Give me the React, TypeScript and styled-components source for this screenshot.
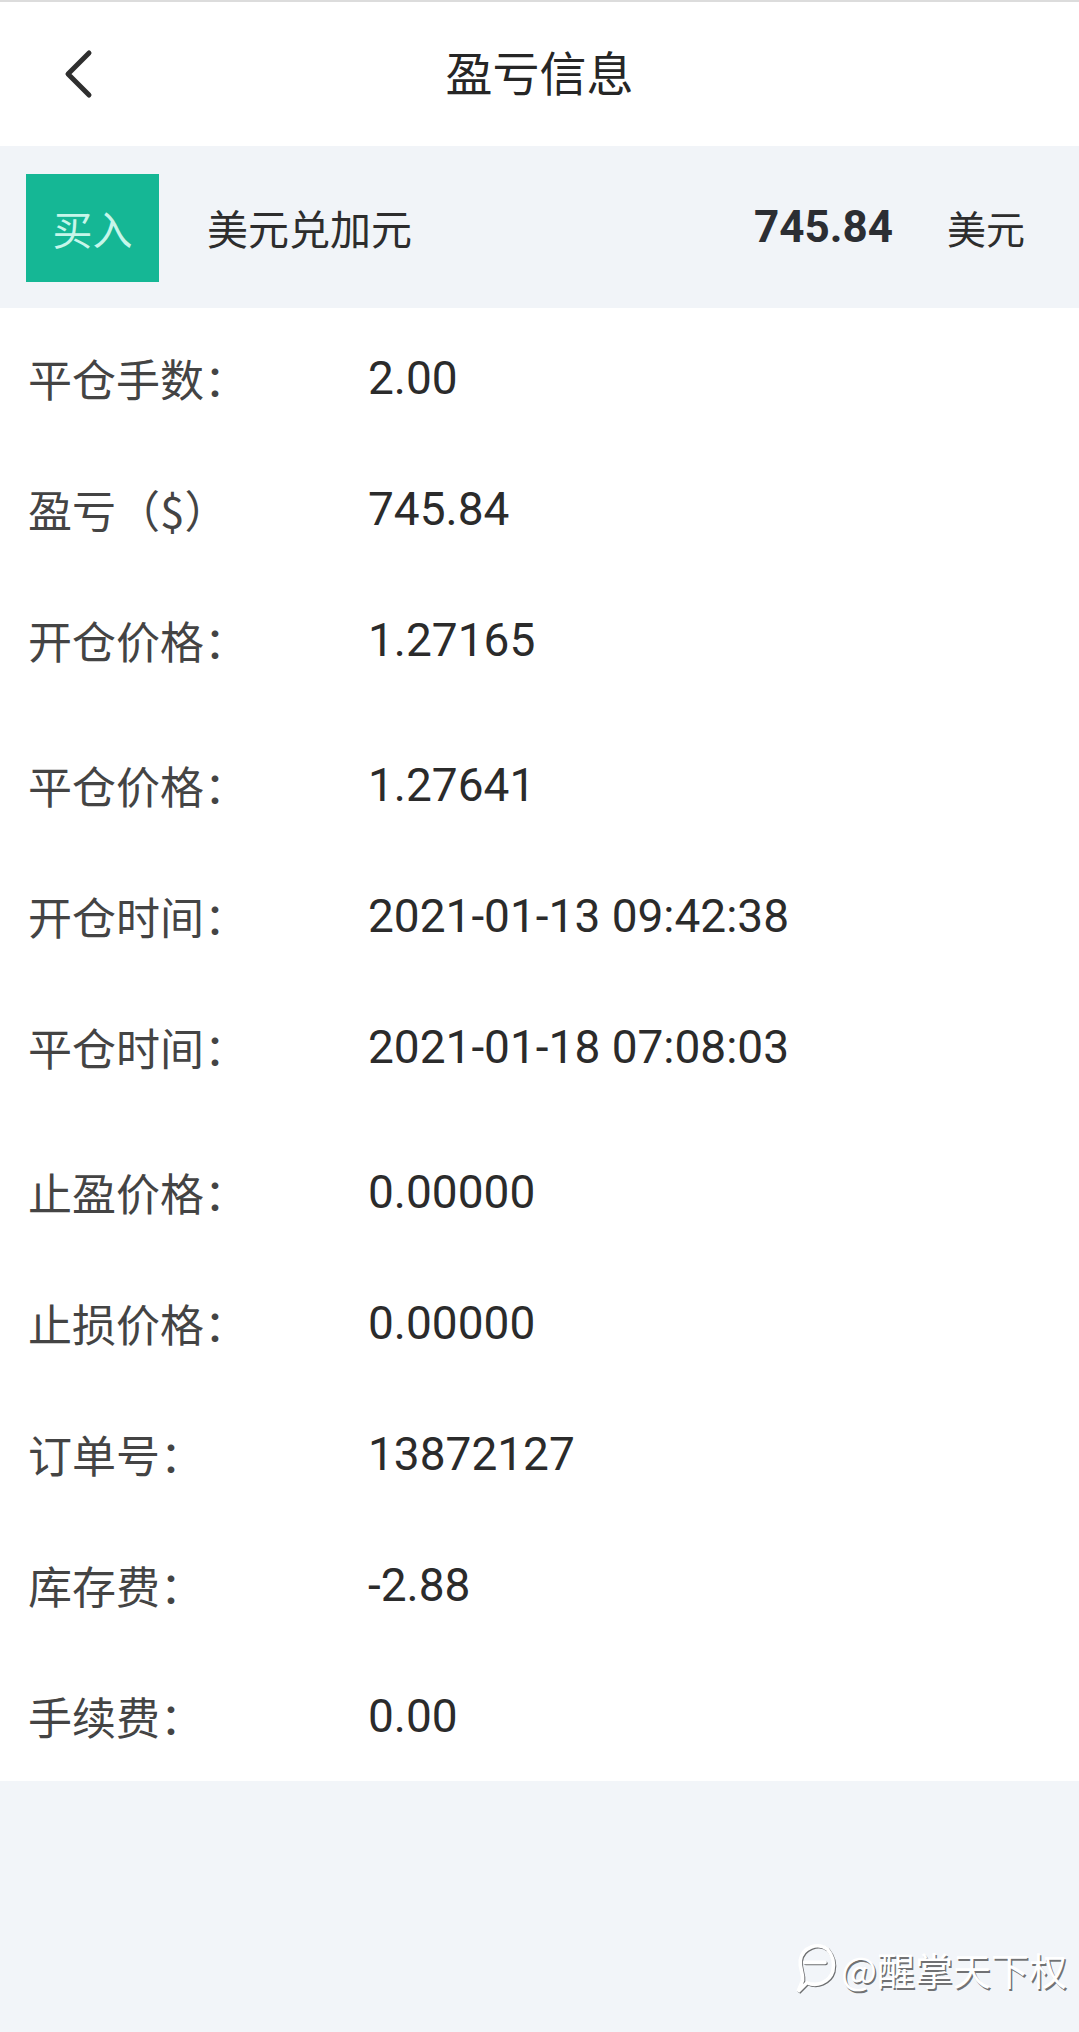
import styled, { createGlobalStyle } from "styled-components";

const GlobalStyle = createGlobalStyle`
  body {
    margin: 0;
    background: #f2f5f9;
    font-family: Roboto, "Noto Sans CJK SC", sans-serif;
  }
`;

const rows = [
  { label: "平仓手数：", value: "2.00" },
  { label: "盈亏（$）", value: "745.84" },
  { label: "开仓价格：", value: "1.27165", gap: true },
  { label: "平仓价格：", value: "1.27641" },
  { label: "开仓时间：", value: "2021-01-13 09:42:38" },
  { label: "平仓时间：", value: "2021-01-18 07:08:03", gap: true },
  { label: "止盈价格：", value: "0.00000" },
  { label: "止损价格：", value: "0.00000" },
  { label: "订单号：", value: "13872127" },
  { label: "库存费：", value: "-2.88" },
  { label: "手续费：", value: "0.00" },
];

const App = () => {
  return (
    <Page>
      <GlobalStyle />
      <Header>
        <BackButton aria-label="返回">
          <svg width="32" height="50" viewBox="0 0 32 50">
            <polyline
              points="27,4 6,25 27,46"
              fill="none"
              stroke="#2f2f2f"
              strokeWidth="5"
              strokeLinecap="round"
              strokeLinejoin="round"
            />
          </svg>
        </BackButton>
        <Title>盈亏信息</Title>
        <span />
      </Header>

      <Summary>
        <Badge>买入</Badge>
        <Pair>美元兑加元</Pair>
        <Amount>745.84</Amount>
        <Currency>美元</Currency>
      </Summary>

      <Details>
        {rows.map((row) => (
          <Row key={row.label} $gap={row.gap}>
            <Label>{row.label}</Label>
            <Value>{row.value}</Value>
          </Row>
        ))}
      </Details>

      <Watermark>
        <svg width="46" height="56" viewBox="0 0 40 50">
          <g fill="none" stroke="#fff" strokeWidth="3.2" strokeLinecap="round">
            <path d="M30 8 C22 2 8 6 6 18 C5 26 9 30 8 36 L4 46 L12 38 C20 42 32 38 35 28 C37 20 35 14 30 8" />
            <path d="M10 20 L28 20" />
          </g>
        </svg>
        <span>@醒掌天下权</span>
      </Watermark>
    </Page>
  );
};

const Page = styled.div`
  position: relative;
  min-height: 2032px;
  background: #f2f5f9;
`;

const Header = styled.header`
  display: grid;
  grid-template-columns: 1fr auto 1fr;
  align-items: center;
  height: 144px;
  background: #fff;
  border-top: 2px solid #dcdcdc;
`;

const BackButton = styled.button`
  justify-self: start;
  display: flex;
  align-items: center;
  margin-left: 62px;
  padding: 0;
  border: none;
  background: transparent;
`;

const Title = styled.h1`
  margin: 0 0 8px;
  font-family: "Noto Sans CJK SC", sans-serif;
  font-size: 47px;
  font-weight: 400;
  line-height: 1;
  color: #262626;
`;

const Summary = styled.section`
  display: flex;
  align-items: center;
  height: 162px;
  padding: 0 54px 0 26px;
  background: #f1f4f8;
  box-sizing: border-box;
`;

const Badge = styled.div`
  display: flex;
  align-items: center;
  justify-content: center;
  width: 133px;
  height: 108px;
  margin-top: 2px;
  background: #15b795;
  color: #c6f6ea;
  font-family: "Noto Sans CJK SC", sans-serif;
  font-size: 40px;
`;

const Pair = styled.div`
  flex: 1;
  margin-left: 48px;
  font-family: "Noto Sans CJK SC", sans-serif;
  font-size: 41px;
  color: #2d2d2d;
`;

const Amount = styled.div`
  font-family: Roboto, sans-serif;
  font-size: 44px;
  font-weight: 700;
  color: #2c2e33;
`;

const Currency = styled.div`
  margin-left: 54px;
  font-family: "Noto Sans CJK SC", sans-serif;
  font-size: 39px;
  color: #2d2d2d;
`;

const Details = styled.section`
  padding-top: 4px;
  background: #fff;
`;

const Row = styled.div<{ $gap?: boolean }>`
  display: flex;
  align-items: center;
  height: 131px;
  padding-left: 28px;
  margin-bottom: ${(p) => (p.$gap ? "14px" : "0")};
`;

const Label = styled.div`
  width: 340px;
  font-family: "Noto Sans CJK SC", sans-serif;
  font-size: 44px;
  color: #444444;
`;

const Value = styled.div`
  font-family: Roboto, sans-serif;
  font-size: 46px;
  color: #2b2b2b;
`;

const Watermark = styled.div`
  position: absolute;
  right: 12px;
  bottom: 36px;
  display: flex;
  align-items: center;
  gap: 2px;
  color: #fff;
  font-family: "Noto Sans CJK SC", sans-serif;
  font-size: 38px;
  text-shadow: 1.5px 1.5px 0 rgba(0, 0, 0, 0.55);

  svg {
    filter: drop-shadow(1.5px 1.5px 0 rgba(0, 0, 0, 0.55));
  }
`;

export default App;
